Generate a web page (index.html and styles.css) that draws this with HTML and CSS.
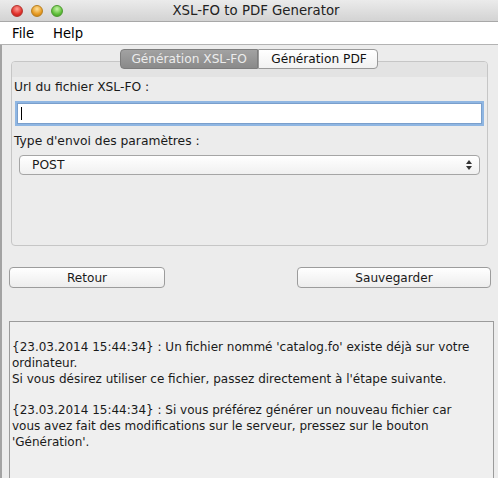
FILE: index.html
```html
<!DOCTYPE html>
<html lang="fr">
<head>
    <meta charset="UTF-8">
    <meta name="viewport" content="width=device-width, initial-scale=1.0">
    <title>XSL-FO to PDF Generator</title>
    <link rel="stylesheet" href="styles.css">
</head>
<body>

    <div class="window">
        <div class="titlebar">
            <div class="lights">
                <span class="light red"></span>
                <span class="light yellow"></span>
                <span class="light green"></span>
            </div>
            <div class="title">XSL-FO to PDF Generator</div>
        </div>

        <div class="menubar">
            <span class="menu">File</span>
            <span class="menu">Help</span>
        </div>

        <div class="content">
            <div class="tabs">
                <span class="tab selected">Génération XSL-FO</span>
                <span class="tab">Génération PDF</span>
            </div>

            <div class="panel">
                <div class="band"></div>
                <label class="label">Url du fichier XSL-FO :</label>
                <div class="input"><span class="caret"></span></div>

                <label class="label">Type d'envoi des paramètres :</label>
                <div class="select">
                    <span>POST</span>
                    <span class="arrows">
                        <span class="up"></span>
                        <span class="down"></span>
                    </span>
                </div>
            </div>

            <div class="buttons">
                <button class="btn retour">Retour</button>
                <button class="btn sauver">Sauvegarder</button>
            </div>

            <div class="log">
                <p>{23.03.2014 15:44:34} : Un fichier nommé 'catalog.fo' existe déjà sur votre<br>ordinateur.<br>Si vous désirez utiliser ce fichier, passez directement à l'étape suivante.</p>
                <p>{23.03.2014 15:44:34} : Si vous préférez générer un nouveau fichier car<br>vous avez fait des modifications sur le serveur, pressez sur le bouton<br>'Génération'.</p>
            </div>
        </div>
    </div>

</body>
</html>
```

FILE: styles.css
```css
body {
    margin: 0;
    padding: 0;
    width: 498px;
    height: 478px;
    overflow: hidden;
    font-family: 'DejaVu Sans', Verdana, sans-serif;
    color: #1a1a1a;
    background-color: #ececec;
}

.window {
    height: 478px;
    display: flex;
    flex-direction: column;
}

.titlebar {
    height: 22px;
    background: linear-gradient(#ebebeb, #d3d3d3);
    border-bottom: 1px solid #a8a8a8;
    box-sizing: border-box;
    display: flex;
    align-items: center;
    position: relative;
}

.lights {
    display: flex;
    gap: 8px;
    margin-left: 11px;
}

.light {
    width: 12px;
    height: 12px;
    border-radius: 50%;
    box-sizing: border-box;
}

.red {
    background: radial-gradient(circle at 50% 30%, #ff9a94, #e0302a 60%, #b3201b);
    border: 1px solid #b5332e;
}

.yellow {
    background: radial-gradient(circle at 50% 30%, #ffe09a, #e69a22 60%, #b87416);
    border: 1px solid #b9801f;
}

.green {
    background: radial-gradient(circle at 50% 30%, #c8f5a8, #5fbf3a 60%, #3c8f22);
    border: 1px solid #4d9a30;
}

.title {
    position: absolute;
    left: 0;
    right: 0;
    text-align: center;
    font-size: 13.3px;
    color: #222;
    padding-left: 14px;
}

.menubar {
    height: 22px;
    background-color: #fff;
    border-bottom: 1px solid #b3b3b3;
    display: flex;
    align-items: center;
    gap: 19px;
    padding-left: 12px;
    font-size: 13.2px;
    color: #000;
}

.content {
    flex: 1;
    border-left: 2px solid #a3a3a3;
    display: flex;
    flex-direction: column;
}

.tabs {
    display: flex;
    justify-content: center;
    margin-top: 4px;
    margin-left: 8px;
    margin-right: 10px;
    position: relative;
    z-index: 1;
}

.tab {
    height: 20px;
    box-sizing: border-box;
    font-size: 12.2px;
    line-height: 18px;
    padding: 0 10px 0 12px;
    border: 1px solid #9a9a9a;
    border-radius: 0 4px 4px 0;
    background: linear-gradient(#ffffff, #f1f1f1);
    color: #111;
}

.tab.selected {
    width: 138px;
    text-align: center;
    padding: 0;
    border-color: #7d7d7d;
    border-radius: 4px 0 0 4px;
    background: linear-gradient(#a2a2a2, #8a8a8a);
    color: #ececec;
}

.panel {
    margin: -8px 10px 0 9px;
    height: 185px;
    border: 1px solid #c6c6c6;
    border-radius: 4px;
    box-sizing: border-box;
    display: flex;
    flex-direction: column;
    padding: 0 5px 0 2px;
}

.band {
    height: 15px;
    margin: 0 -5px 0 -2px;
    background-color: #e3e3e3;
    border-radius: 3px 3px 0 0;
    flex-shrink: 0;
}

.label {
    font-size: 12.3px;
    line-height: 16px;
    margin-top: 2px;
}

.panel .label + .select {
    margin-top: 6px;
}

.input {
    margin: 8px 0 0 3px;
    height: 21px;
    background-color: #fff;
    border: 1px solid #7a9fcc;
    box-shadow: 0 0 0 2px #8fb6e2;
    box-sizing: border-box;
    display: flex;
    align-items: center;
    padding-left: 3px;
    margin-bottom: 7px;
}

.caret {
    width: 1px;
    height: 13px;
    background-color: #000;
}

.select {
    margin: 0 2px 0 5px;
    height: 20px;
    box-sizing: border-box;
    border: 1px solid #a5a5a5;
    border-radius: 4px;
    background: linear-gradient(#ffffff, #f0f0f0);
    display: flex;
    align-items: center;
    justify-content: space-between;
    padding: 0 7px 0 12px;
    font-size: 12.3px;
}

.arrows {
    display: flex;
    flex-direction: column;
    gap: 2px;
}

.up, .down {
    width: 0;
    height: 0;
    border-left: 3px solid transparent;
    border-right: 3px solid transparent;
}

.up {
    border-bottom: 4px solid #333;
}

.down {
    border-top: 4px solid #333;
}

.buttons {
    display: flex;
    justify-content: space-between;
    margin: 21px 7px 0 7px;
}

.btn {
    height: 21px;
    box-sizing: border-box;
    border: 1px solid #9c9c9c;
    border-radius: 4px;
    background: linear-gradient(#ffffff, #ededed);
    font-family: 'DejaVu Sans', Verdana, sans-serif;
    font-size: 12.1px;
    color: #1a1a1a;
    padding: 0;
}

.retour {
    width: 156px;
}

.sauver {
    width: 194px;
}

.log {
    flex: 1;
    margin: 33px 4px 0 7px;
    border: 1px solid #9b9b9b;
    border-bottom: none;
    background-color: #efefef;
    padding: 18px 2px 0 2px;
    font-size: 12px;
    line-height: 15.8px;
    white-space: nowrap;
}

.log p {
    margin: 0 0 15.8px 0;
}
```
